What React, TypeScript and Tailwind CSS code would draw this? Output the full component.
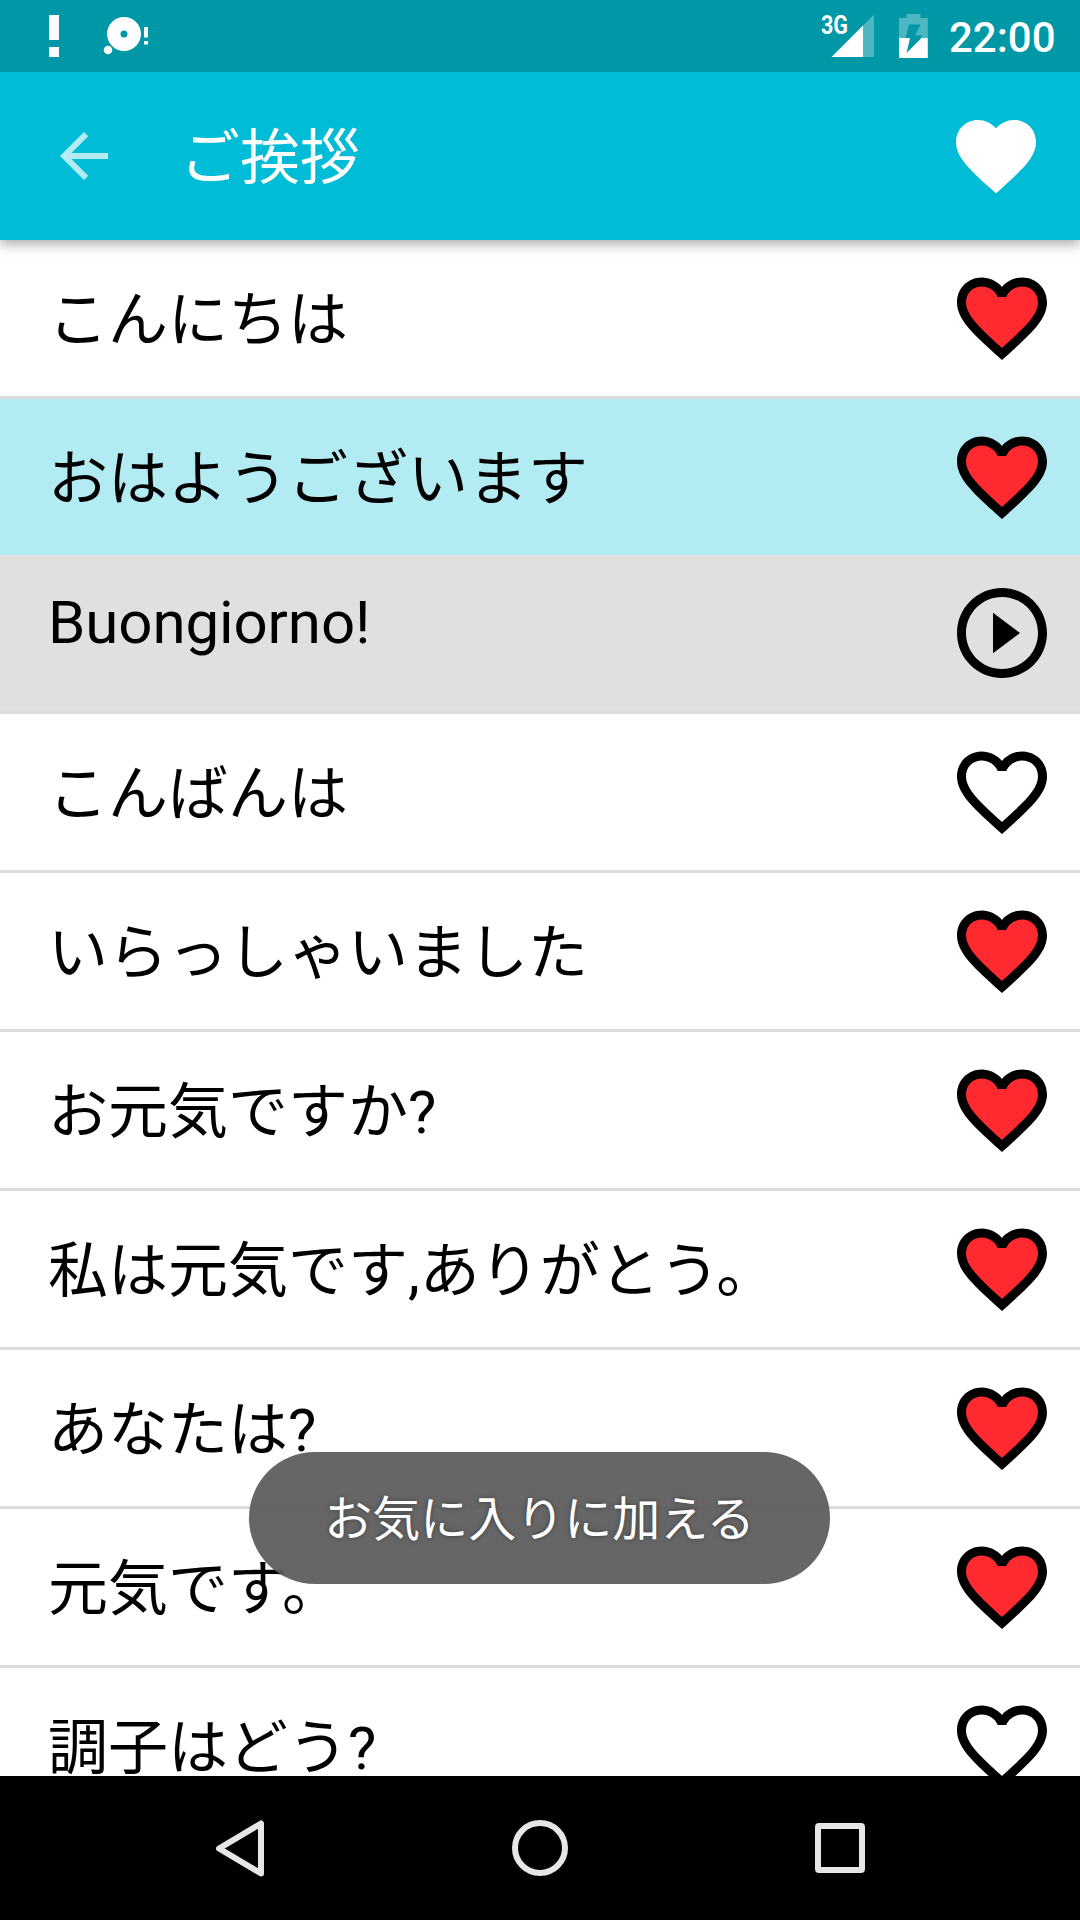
const HEART =
    "M12 21.35l-1.45-1.32C5.4 15.36 2 12.28 2 8.5 2 5.42 4.42 3 7.5 3c1.74 0 3.41.81 4.5 2.09C13.09 3.81 14.76 3 16.5 3 19.58 3 22 5.42 22 8.5c0 3.78-3.4 6.86-8.55 11.54L12 21.35z";
const HEART_BORDER =
    "M16.5 3c-1.74 0-3.41.81-4.5 2.09C10.91 3.81 9.24 3 7.5 3 4.42 3 2 5.42 2 8.5c0 3.78 3.4 6.86 8.55 11.54L12 21.35l1.45-1.32C18.6 15.36 22 12.28 22 8.5 22 5.42 19.58 3 16.5 3zm-4.4 15.55l-.1.1-.1-.1C7.14 14.24 4 11.39 4 8.5 4 6.5 5.5 5 7.5 5c1.54 0 3.04.99 3.57 2.36h1.87C13.46 5.99 14.96 5 16.5 5c2 0 3.5 1.5 3.5 3.5 0 2.89-3.14 5.74-7.9 10.05z";

type Phrase = {
    text: string;
    favorite: boolean;
    translation?: string;
};

const phrases: Phrase[] = [
    { text: "こんにちは", favorite: true },
    { text: "おはようございます", favorite: true, translation: "Buongiorno!" },
    { text: "こんばんは", favorite: false },
    { text: "いらっしゃいました", favorite: true },
    { text: "お元気ですか?", favorite: true },
    { text: "私は元気です,ありがとう。", favorite: true },
    { text: "あなたは?", favorite: true },
    { text: "元気です。", favorite: true },
    { text: "調子はどう?", favorite: false },
];

function FavoriteIcon({ filled }: { filled: boolean }) {
    return (
        <svg className="w-[108px] h-[108px] shrink-0" viewBox="0 0 24 24">
            {filled && <path d={HEART} fill="#ff2a2f" transform="translate(1.2 1.2) scale(.9)" />}
            <path d={HEART_BORDER} />
        </svg>
    );
}

function StatusBar() {
    return (
        <header className="h-[72px] shrink-0 bg-[#0097a7] flex items-center justify-between text-white relative z-20">
            <svg className="w-[160px] h-[72px]" viewBox="0 0 160 72" fill="#fff">
                <path d="M49 15h10v25H49zM49 47h10v10H49z" />
                <path fillRule="evenodd" d="M124 17a17 17 0 1 1 0 34a17 17 0 0 1 0-34zm0 13.5a3.5 3.5 0 1 0 0 7a3.5 3.5 0 0 0 0-7z" />
                <circle cx="108" cy="50" r="4.3" />
                <path d="M144 27h4v10.500h-4zM144 41h4v3.500h-4z" />
            </svg>
            <div className="flex items-center h-full pr-[25px]">
                <svg className="w-[130px] h-[72px] shrink-0" viewBox="820 0 130 72" fill="#fff">
                    <text x="821" y="33.500" fontSize="25" fontWeight="700" textLength="27" lengthAdjust="spacingAndGlyphs">3G</text>
                    <path d="M874 14.500V57H863V25.500z" opacity=".3" />
                    <path d="M863 25.500V57H831.500z" />
                    <path fillRule="evenodd" opacity=".3" d="M906.500 14h14v4h7.300v20H899V18h7.500zM909 24.500L905.500 38H920l3-2.500h-8l5.500-11z" />
                    <path fillRule="evenodd" d="M899 38h28.800v20H899zM905.500 38h4.500l-3.500 15L921.500 38z" />
                </svg>
                <span className="w-[106px] -ml-px pt-[3px] text-[42px] leading-none font-medium">22:00</span>
            </div>
        </header>
    );
}

function AppBar() {
    return (
        <div className="h-[168px] shrink-0 bg-[#00bcd7] flex items-center pl-12 pr-9 relative z-10 shadow-[0_4px_12px_rgba(0,0,0,0.35)]">
            <svg className="w-[72px] h-[72px]" viewBox="0 0 24 24" fill="#b2ebf2">
                <path d="M20 11H7.830l5.590-5.590L12 4l-8 8 8 8 1.410-1.410L7.830 13H20v-2z" />
            </svg>
            <h1 className="flex-1 ml-[60px] pt-1.5 text-[60px] leading-none text-white">ご挨拶</h1>
            <svg className="w-24 h-24" viewBox="0 0 24 24" fill="#fff">
                <path d={HEART} />
            </svg>
        </div>
    );
}

function PhraseRow({ phrase }: { phrase: Phrase }) {
    const open = phrase.translation !== undefined;

    return (
        <li>
            <div className={`flex items-center justify-between h-[156px] pl-12 pr-6 ${open ? "bg-[#b2ebf2]" : "bg-white"}`}>
                <span className="pt-1.5">{phrase.text}</span>
                <FavoriteIcon filled={phrase.favorite} />
            </div>
            {open && (
                <div className="flex items-center justify-between h-[156px] pl-12 pr-6 bg-[#e0e0e0]">
                    <span className="pb-5 tracking-[-0.1px]">{phrase.translation}</span>
                    <svg className="w-[108px] h-[108px]" viewBox="0 0 24 24">
                        <path d="M10 16.500l6-4.500-6-4.500v9zM12 2C6.480 2 2 6.480 2 12s4.480 10 10 10 10-4.480 10-10S17.520 2 12 2zm0 18c-4.410 0-8-3.590-8-8s3.590-8 8-8 8 3.590 8 8-3.590 8-8 8z" />
                    </svg>
                </div>
            )}
            <div className="h-[3px] bg-[#dbdbdb]" />
        </li>
    );
}

function NavigationBar() {
    return (
        <nav className="h-36 shrink-0 bg-black flex items-center justify-center gap-[156px] relative z-10">
            {/* Back */}
            <svg className="w-36 h-36" viewBox="168 0 144 144" fill="none" stroke="#e6e6e6" strokeWidth="6" strokeLinejoin="round">
                <path d="M261 47.500V97.500L219 72.500z" />
            </svg>
            {/* Home */}
            <svg className="w-36 h-36" viewBox="468 0 144 144" fill="none" stroke="#e6e6e6" strokeWidth="6">
                <circle cx="540" cy="72" r="25" />
            </svg>
            {/* Recents */}
            <svg className="w-36 h-36" viewBox="768 0 144 144" fill="none" stroke="#e6e6e6" strokeWidth="6">
                <rect x="818" y="50" width="44" height="44" rx="1" />
            </svg>
        </nav>
    );
}

export default function App() {
    return (
        <div className="w-[1080px] h-[1920px] flex flex-col relative overflow-hidden bg-white text-black font-['Roboto','Noto_Sans_CJK_JP',sans-serif]" lang="ja">
            <StatusBar />
            <AppBar />
            <ul className="flex-1 min-h-0 overflow-hidden text-[60px] leading-[70px]">
                {phrases.map((phrase) => (
                    <PhraseRow key={phrase.text} phrase={phrase} />
                ))}
            </ul>
            <NavigationBar />

            {/* Toast */}
            <div className="absolute left-[249px] top-[1452px] w-[581px] h-[132px] rounded-full bg-[#5c5c5c]/94 flex items-center justify-center z-20">
                <span className="pt-1 text-[48px] leading-none text-white [text-shadow:0_0_5px_rgba(0,0,0,0.4)]">お気に入りに加える</span>
            </div>
        </div>
    );
}
